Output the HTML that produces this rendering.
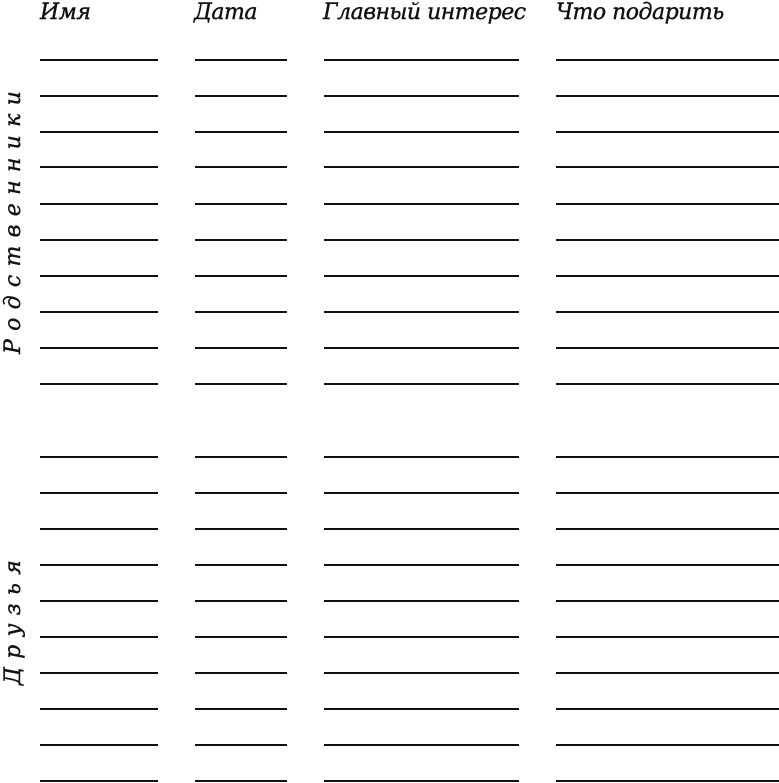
<!DOCTYPE html>
<html><head><meta charset="utf-8"><style>
body{margin:0;width:779px;height:783px;background:#fff;position:relative;overflow:hidden;font-family:"DejaVu Serif","Liberation Serif",serif;font-style:italic;color:#111}
.h{position:absolute;top:0px;font-size:22px;white-space:nowrap;letter-spacing:-0.5px;-webkit-text-stroke:0.4px #111}
.l{position:absolute;height:2px;background:#111}
.v{position:absolute;font-size:22px;white-space:nowrap;transform:rotate(-90deg);transform-origin:0 0;letter-spacing:8.3px;-webkit-text-stroke:0.4px #111}
</style></head><body>
<div class="h" style="left:40px">Имя</div>
<div class="h" style="left:194px">Дата</div>
<div class="h" style="left:323px">Главный интерес</div>
<div class="h" style="left:556px">Что подарить</div>
<div class="v" style="left:1px;top:354px">Родственники</div>
<div class="v" style="left:1px;top:685px">Друзья</div>
<div id="c"></div>
<script>
var ys=[59,95,131,166,203,239,275,311,347,383,456,492,528,564,600,636,672,708,744,780];
var cols=[[40,158],[195,287],[324,519],[556,779]];
var h='';
ys.forEach(function(y){cols.forEach(function(c){h+='<div class="l" style="top:'+y+'px;left:'+c[0]+'px;width:'+(c[1]-c[0])+'px"></div>';});});
document.getElementById('c').innerHTML=h;
</script>
</body></html>
